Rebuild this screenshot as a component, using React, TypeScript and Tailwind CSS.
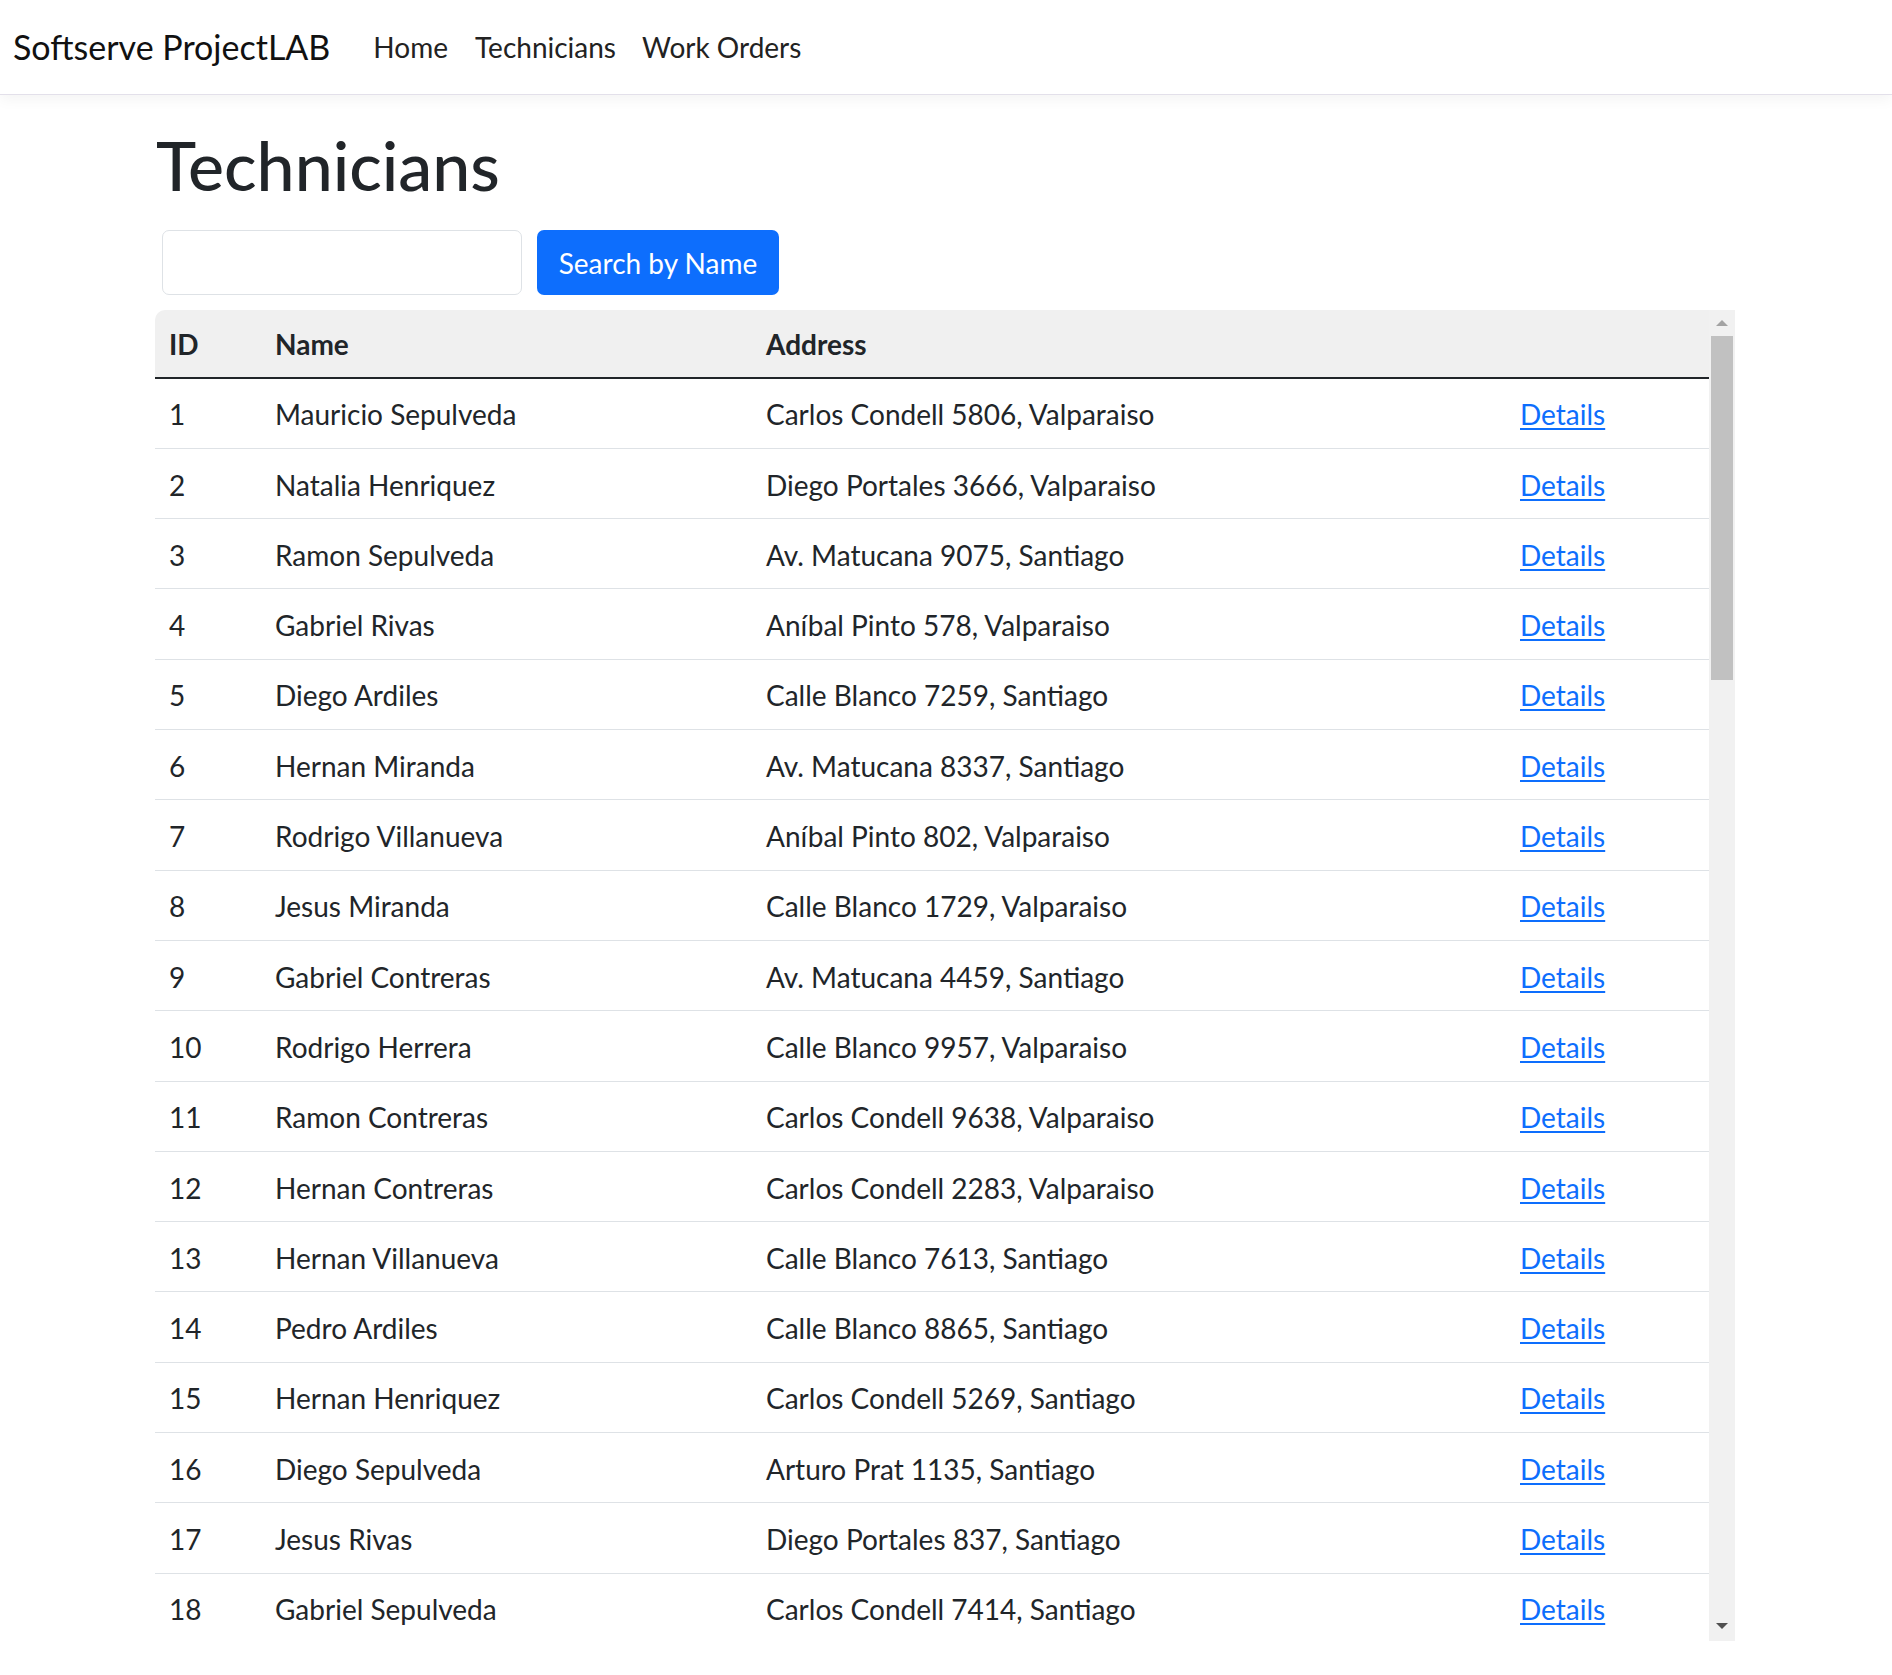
import React from 'react'

type Technician = { id: number; name: string; address: string }

const technicians: Technician[] = [
    { id: 1, name: 'Mauricio Sepulveda', address: 'Carlos Condell 5806, Valparaiso' },
    { id: 2, name: 'Natalia Henriquez', address: 'Diego Portales 3666, Valparaiso' },
    { id: 3, name: 'Ramon Sepulveda', address: 'Av. Matucana 9075, Santiago' },
    { id: 4, name: 'Gabriel Rivas', address: 'Aníbal Pinto 578, Valparaiso' },
    { id: 5, name: 'Diego Ardiles', address: 'Calle Blanco 7259, Santiago' },
    { id: 6, name: 'Hernan Miranda', address: 'Av. Matucana 8337, Santiago' },
    { id: 7, name: 'Rodrigo Villanueva', address: 'Aníbal Pinto 802, Valparaiso' },
    { id: 8, name: 'Jesus Miranda', address: 'Calle Blanco 1729, Valparaiso' },
    { id: 9, name: 'Gabriel Contreras', address: 'Av. Matucana 4459, Santiago' },
    { id: 10, name: 'Rodrigo Herrera', address: 'Calle Blanco 9957, Valparaiso' },
    { id: 11, name: 'Ramon Contreras', address: 'Carlos Condell 9638, Valparaiso' },
    { id: 12, name: 'Hernan Contreras', address: 'Carlos Condell 2283, Valparaiso' },
    { id: 13, name: 'Hernan Villanueva', address: 'Calle Blanco 7613, Santiago' },
    { id: 14, name: 'Pedro Ardiles', address: 'Calle Blanco 8865, Santiago' },
    { id: 15, name: 'Hernan Henriquez', address: 'Carlos Condell 5269, Santiago' },
    { id: 16, name: 'Diego Sepulveda', address: 'Arturo Prat 1135, Santiago' },
    { id: 17, name: 'Jesus Rivas', address: 'Diego Portales 837, Santiago' },
    { id: 18, name: 'Gabriel Sepulveda', address: 'Carlos Condell 7414, Santiago' },
]

export default function App() {
    return (
        <div className="min-h-screen bg-white text-[#212529] font-['Lato','Liberation_Sans',sans-serif]">
            <nav className="h-[95px] border-b border-[#e3e0ea] shadow-[0_4px_14px_rgba(0,0,0,0.05)] flex items-center pl-[13px]">
                <a href="#" className="text-[34px] text-[#111] leading-none">Softserve ProjectLAB</a>
                <div className="flex items-center ml-[29px] text-[28px]">
                    <a href="#" className="px-[14px] text-[#222]">Home</a>
                    <a href="#" className="px-[13px] text-[#222]">Technicians</a>
                    <a href="#" className="px-[13px] text-[#222]">Work Orders</a>
                </div>
            </nav>

            <main className="ml-[155px] w-[1580px]">
                <h1 className="mt-[29px] text-[68px] font-medium leading-[1.2] ml-[1px]">Technicians</h1>

                <div className="flex gap-[15px] ml-[7px] mt-[24px]">
                    <input type="text" className="w-[360px] h-[65px] rounded-[7px] border border-[#dee2e6] px-[21px] text-[28px] outline-none" />
                    <button className="w-[242px] h-[65px] rounded-[7px] bg-[#0d6efd] text-white text-[28px] text-center pt-[2px]">Search by Name</button>
                </div>

                <div className="mt-[15px] flex h-[1331px]">
                    <div className="flex-1 overflow-hidden rounded-tl-[10px] text-[28px]">
                        <div className="flex items-center h-[69px] pt-[2px] bg-[#f0f0f0] border-b-2 border-[#212529] font-bold">
                            <div className="w-[106px] px-[14px]">ID</div>
                            <div className="w-[491px] px-[14px]">Name</div>
                            <div className="w-[754px] px-[14px]">Address</div>
                            <div className="flex-1 px-[14px]"></div>
                        </div>
                        {technicians.map((t) => (
                            <TechnicianRow key={t.id} tech={t} />
                        ))}
                    </div>
                    <ScrollBar />
                </div>
            </main>
        </div>
    )
}

function TechnicianRow({ tech }: { tech: Technician }) {
    return (
        <div className="flex items-center h-[70.3px] pt-[2px] border-b border-[#dee2e6]">
            <div className="w-[106px] px-[14px]">{tech.id}</div>
            <div className="w-[491px] px-[14px]">{tech.name}</div>
            <div className="w-[754px] px-[14px]">{tech.address}</div>
            <div className="flex-1 px-[14px]">
                <a href="#" className="text-[#0d6efd] underline underline-offset-[3px]">Details</a>
            </div>
        </div>
    )
}

function ScrollBar() {
    return (
        <div className="w-[26px] bg-[#f1f1f1] flex flex-col items-center">
            <div className="h-[26px] flex items-center justify-center">
                <div className="w-0 h-0 border-l-[6px] border-r-[6px] border-b-[6px] border-l-transparent border-r-transparent border-b-[#a3a3a3]"></div>
            </div>
            <div className="w-[22px] h-[344px] bg-[#c1c1c1]"></div>
            <div className="flex-1"></div>
            <div className="h-[26px] flex items-start justify-center pt-[8px]">
                <div className="w-0 h-0 border-l-[6px] border-r-[6px] border-t-[6px] border-l-transparent border-r-transparent border-t-[#505050]"></div>
            </div>
        </div>
    )
}
